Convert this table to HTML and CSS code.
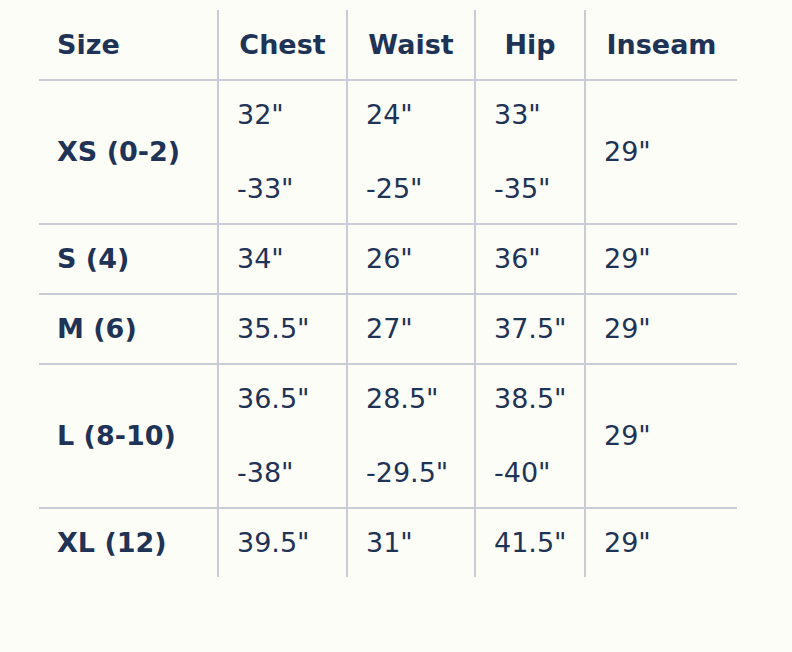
FILE: index.html
```html
<!DOCTYPE html>
<html>
<head>
<meta charset="utf-8">
<link rel="stylesheet" href="styles.css">
</head>
<body>
<table class="size-table">
  <colgroup>
    <col class="c1"><col class="c2"><col class="c3"><col class="c4"><col class="c5">
  </colgroup>
  <thead>
    <tr class="head">
      <th>Size</th><th>Chest</th><th>Waist</th><th>Hip</th><th>Inseam</th>
    </tr>
  </thead>
  <tbody>
    <tr>
      <th>XS (0-2)</th>
      <td><div class="range"><span>32"</span><span>-33"</span></div></td>
      <td><div class="range"><span>24"</span><span>-25"</span></div></td>
      <td><div class="range"><span>33"</span><span>-35"</span></div></td>
      <td>29"</td>
    </tr>
    <tr>
      <th>S (4)</th><td>34"</td><td>26"</td><td>36"</td><td>29"</td>
    </tr>
    <tr>
      <th>M (6)</th><td>35.5"</td><td>27"</td><td>37.5"</td><td>29"</td>
    </tr>
    <tr>
      <th>L (8-10)</th>
      <td><div class="range"><span>36.5"</span><span>-38"</span></div></td>
      <td><div class="range"><span>28.5"</span><span>-29.5"</span></div></td>
      <td><div class="range"><span>38.5"</span><span>-40"</span></div></td>
      <td>29"</td>
    </tr>
    <tr class="last">
      <th>XL (12)</th><td>39.5"</td><td>31"</td><td>41.5"</td><td>29"</td>
    </tr>
  </tbody>
</table>
</body>
</html>
```

FILE: styles.css
```css
html, body {
  margin: 0;
  padding: 0;
  background: #fdfdf8;
}
body {
  padding: 10px 0 0 39px;
  font-family: "DejaVu Sans", sans-serif;
  color: #1e3356;
}
.size-table {
  border-collapse: separate;
  border-spacing: 0;
  table-layout: fixed;
  width: 698px;
}
.c1 { width: 178px; }
.c2 { width: 129px; }
.c3 { width: 128px; }
.c4 { width: 110px; }
.c5 { width: 153px; }
.size-table th,
.size-table td {
  padding: 17px 0 17px 18px;
  font-size: 27px;
  line-height: 34px;
  text-align: left;
  vertical-align: middle;
  border-bottom: 2px solid #c9ccd6;
  white-space: nowrap;
}
.size-table th { font-weight: 700; }
.size-table td { font-weight: 400; }
.size-table th + th,
.size-table td { border-left: 2px solid #c9ccd6; }
.head th { padding-top: 18px; }
.head th + th {
  text-align: center;
  padding-left: 0;
}
.last th, .last td { border-bottom: none; }
.range {
  display: flex;
  flex-direction: column;
  gap: 40px;
}
```
